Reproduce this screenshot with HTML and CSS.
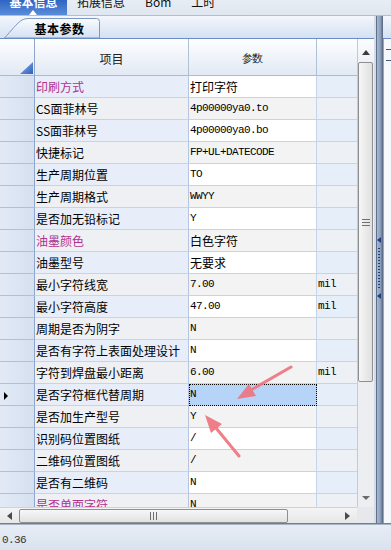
FILE: index.html
```html
<!DOCTYPE html>
<html>
<head>
<meta charset="utf-8">
<link rel="stylesheet" href="styles.css">
</head>
<body>
<div class="app">
  <div class="topbar">
    <div class="ttab active"><span>基本信息</span><i class="ptr"></i></div>
    <div class="ttab"><span>拓展信息</span></div>
    <div class="ttab"><span>Bom</span></div>
    <div class="ttab"><span>工时</span></div>
  </div>
  <div class="main">
    <div class="left">
      <div class="tabstrip">
        <div class="ptab">
          <svg class="ptab-shape" width="97" height="21" viewBox="0 0 97 21">
            <defs>
              <linearGradient id="tg" x1="0" y1="0" x2="0" y2="1">
                <stop offset="0" stop-color="#fbfcfe"/>
                <stop offset="1" stop-color="#d3e0f3"/>
              </linearGradient>
            </defs>
            <path d="M0.5,21 C7,14 13,6 18,3 Q21,1.5 24,1.5 L92.5,1.5 Q95.5,1.5 95.5,4.5 L95.5,21 Z" fill="url(#tg)" stroke="#7d98c4" stroke-width="1"/>
          </svg>
          <span>基本参数</span>
        </div>
      </div>
      <div class="gridwrap">
        <div class="grid">
          <div class="row ghead">
            <div class="c rh corner"><svg width="13" height="12" viewBox="0 0 13 12"><defs><linearGradient id="cg" x1="0" y1="0" x2="1" y2="1"><stop offset="0" stop-color="#8fb0e6"/><stop offset="1" stop-color="#2d60bd"/></linearGradient></defs><polygon points="0,12 13,0 13,12" fill="url(#cg)"/></svg></div>
            <div class="c item">项目</div>
            <div class="c val">参数</div>
            <div class="c unit"></div>
          </div>
          <div class="gbody">
            <div class="row"><div class="c rh"></div><div class="c item hl">印刷方式</div><div class="c val cjk">打印字符</div><div class="c unit"></div></div>
            <div class="row"><div class="c rh"></div><div class="c item">CS面菲林号</div><div class="c val">4p00000ya0.to</div><div class="c unit"></div></div>
            <div class="row"><div class="c rh"></div><div class="c item">SS面菲林号</div><div class="c val">4p00000ya0.bo</div><div class="c unit"></div></div>
            <div class="row"><div class="c rh"></div><div class="c item">快捷标记</div><div class="c val">FP+UL+DATECODE</div><div class="c unit"></div></div>
            <div class="row"><div class="c rh"></div><div class="c item">生产周期位置</div><div class="c val">TO</div><div class="c unit"></div></div>
            <div class="row"><div class="c rh"></div><div class="c item">生产周期格式</div><div class="c val">WWYY</div><div class="c unit"></div></div>
            <div class="row"><div class="c rh"></div><div class="c item">是否加无铅标记</div><div class="c val">Y</div><div class="c unit"></div></div>
            <div class="row"><div class="c rh"></div><div class="c item hl">油墨颜色</div><div class="c val cjk">白色字符</div><div class="c unit"></div></div>
            <div class="row"><div class="c rh"></div><div class="c item">油墨型号</div><div class="c val cjk">无要求</div><div class="c unit"></div></div>
            <div class="row"><div class="c rh"></div><div class="c item">最小字符线宽</div><div class="c val">7.00</div><div class="c unit">mil</div></div>
            <div class="row"><div class="c rh"></div><div class="c item">最小字符高度</div><div class="c val">47.00</div><div class="c unit">mil</div></div>
            <div class="row"><div class="c rh"></div><div class="c item">周期是否为阴字</div><div class="c val">N</div><div class="c unit"></div></div>
            <div class="row"><div class="c rh"></div><div class="c item">是否有字符上表面处理设计</div><div class="c val">N</div><div class="c unit"></div></div>
            <div class="row"><div class="c rh"></div><div class="c item">字符到焊盘最小距离</div><div class="c val">6.00</div><div class="c unit">mil</div></div>
            <div class="row"><div class="c rh"><i class="cur"></i></div><div class="c item">是否字符框代替周期</div><div class="c val sel">N</div><div class="c unit"></div></div>
            <div class="row"><div class="c rh"></div><div class="c item">是否加生产型号</div><div class="c val">Y</div><div class="c unit"></div></div>
            <div class="row"><div class="c rh"></div><div class="c item">识别码位置图纸</div><div class="c val">/</div><div class="c unit"></div></div>
            <div class="row"><div class="c rh"></div><div class="c item">二维码位置图纸</div><div class="c val">/</div><div class="c unit"></div></div>
            <div class="row"><div class="c rh"></div><div class="c item">是否有二维码</div><div class="c val">N</div><div class="c unit"></div></div>
            <div class="row"><div class="c rh"></div><div class="c item hl">是否单面字符</div><div class="c val">N</div><div class="c unit"></div></div>
          </div>
        </div>
        <div class="vscroll">
          <div class="vbtn up"><i class="tri-up"></i></div>
          <div class="vthumb"><i class="grip-h"></i><i class="grip-h"></i><i class="grip-h"></i></div>
          <div class="vtrack"></div>
          <div class="vbtn down"><i class="tri-down"></i></div>
        </div>
      </div>
      <div class="hrow">
        <div class="hscroll">
          <div class="hbtn"><i class="tri-left"></i></div>
          <div class="hthumb"><i class="grip-v"></i><i class="grip-v"></i><i class="grip-v"></i></div>
          <div class="htrack"></div>
          <div class="hbtn"><i class="tri-right"></i></div>
        </div>
        <div class="hcorner"></div>
      </div>
    </div>
    <div class="splitter">
      <i class="stri"></i>
      <i class="sdots"></i>
      <i class="stri"></i>
    </div>
    <div class="rpanel">
      <div class="rstrip"></div>
      <div class="rbody"><i class="rdash"></i><i class="rdash"></i></div>
    </div>
  </div>
  <div class="sep"></div>
  <div class="status">0.36</div>
  <svg class="annot" width="391" height="550" viewBox="0 0 391 550">
    <g fill="#ee7580" stroke="#ee7580" opacity="0.92">
      <line x1="291" y1="367" x2="251" y2="390" stroke-width="3" stroke-linecap="round"/>
      <polygon points="237,399 256,396 249,384" stroke="none"/>
      <line x1="239" y1="456" x2="216" y2="428" stroke-width="3" stroke-linecap="round"/>
      <polygon points="205,415 222,424 211,433" stroke="none"/>
    </g>
  </svg>
</div>
</body>
</html>
```

FILE: styles.css
```css
* { box-sizing: border-box; }
html, body { margin: 0; padding: 0; }
body {
  width: 391px;
  height: 550px;
  overflow: hidden;
  background: #dfe6ef;
  font-family: "Noto Sans CJK SC", "Noto Sans", sans-serif;
  font-size: 12px;
  color: #000;
}
i { display: block; font-style: normal; }

.app {
  position: relative;
  width: 391px;
  height: 550px;
  display: flex;
  flex-direction: column;
}

/* top tab bar */
.topbar {
  height: 16px;
  flex: none;
  display: flex;
  background: linear-gradient(#e8edf5, #dfe6ef);
  border-bottom: 1px solid #b3bfcf;
  overflow: hidden;
}
.ttab {
  height: 15px;
  padding: 0 10px;
  display: flex;
  justify-content: center;
  line-height: 12px;
  color: #111;
}
.ttab span { margin-top: -4px; }
.ttab.active {
  position: relative;
  width: 67px;
  padding: 0;
  background: linear-gradient(#2e64c3, #5b8cd9);
  color: #fff;
  font-weight: bold;
}
.ptr {
  position: absolute;
  left: 29px;
  bottom: 0;
  width: 0;
  height: 0;
  border-left: 4px solid transparent;
  border-right: 4px solid transparent;
  border-bottom: 5px solid #fff;
}

/* main */
.main {
  height: 507px;
  flex: none;
  display: flex;
}
.left {
  width: 374px;
  flex: none;
  display: flex;
  flex-direction: column;
}
.tabstrip {
  height: 23px;
  flex: none;
  display: flex;
  align-items: flex-end;
  padding-left: 4px;
  background: linear-gradient(#f3f6fb, #d4e1f3);
  border-bottom: 1px solid #6a8cc4;
}
.ptab {
  position: relative;
  width: 97px;
  height: 21px;
  display: flex;
  align-items: center;
  justify-content: center;
  padding-left: 14px;
  padding-top: 1px;
  font-weight: bold;
  letter-spacing: 0.5px;
}
.ptab-shape { position: absolute; left: 0; top: 0; }
.ptab span { position: relative; }

/* grid */
.gridwrap {
  height: 468px;
  flex: none;
  display: flex;
}
.grid {
  width: 357px;
  flex: none;
  display: flex;
  flex-direction: column;
  overflow: hidden;
}
.gbody {
  flex: 1;
  overflow: hidden;
}
.row {
  display: grid;
  grid-template-columns: 35px 154px 128px 40px;
  height: 22px;
}
.c {
  border-right: 1px solid #c6d4ea;
  border-bottom: 1px solid #c6d4ea;
  line-height: 21px;
  padding-left: 1px;
  white-space: nowrap;
  overflow: hidden;
}
.c.rh {
  background: linear-gradient(to right, #e2eaf6, #d5e0f0);
  border-right: 1px solid #8ea6cb;
  border-bottom: 1px solid #aec0dc;
  padding-left: 4px;
  display: flex;
  align-items: center;
}
.c.item { border-right-color: #b3c5e1; }
.c.unit { border-right: none; }

.ghead { height: 37px; }
.ghead .c {
  background: linear-gradient(#fdfeff, #e2e9f4);
  border-bottom-color: #a9bbd6;
  border-right-color: #b0c0d8;
  text-align: center;
  line-height: 32px;
  padding-top: 4px;
  padding-left: 0;
  color: #222;
}
.ghead .c.rh {
  border-right-color: #8ea6cb;
  justify-content: flex-end;
  align-items: flex-end;
  padding: 0 1px 1px 0;
}

.gbody .row:nth-child(odd) .item { background: #e7eef9; }
.gbody .row:nth-child(even) .item { background: #eef0f4; }
.gbody .row:nth-child(odd) .val { background: #ffffff; }
.gbody .row:nth-child(even) .val { background: #f3f3f3; }
.gbody .row:nth-child(odd) .unit { background: #e6eef9; }
.gbody .row:nth-child(even) .unit { background: #edf0f5; }

.item.hl { color: #b0308e; }
.val, .unit {
  font-family: "Liberation Mono", "DejaVu Sans Mono", monospace;
  font-size: 11px;
  letter-spacing: -0.6px;
}
.val.cjk {
  font-family: "Noto Sans CJK SC", sans-serif;
  font-size: 12px;
  letter-spacing: 0;
}
.gbody .row .val.sel {
  background: #b6d4f7;
  outline: 1px dotted #000;
  outline-offset: -1px;
}
.cur {
  width: 0;
  height: 0;
  border-left: 4px solid #000;
  border-top: 4px solid transparent;
  border-bottom: 4px solid transparent;
  margin-top: 2px;
}

/* vertical scrollbar */
.vscroll {
  width: 17px;
  flex: none;
  display: flex;
  flex-direction: column;
  background: #eceef1;
  border-left: 1px solid #c4cad3;
}
.vbtn {
  width: 100%;
  height: 23px;
  flex: none;
  display: flex;
  align-items: center;
  justify-content: center;
}
.vbtn.up { background: linear-gradient(#fbfcfe, #eef1f6); padding-top: 4px; }
.vbtn.down { height: 19px; }
.tri-up {
  width: 0; height: 0;
  border-left: 4px solid transparent;
  border-right: 4px solid transparent;
  border-bottom: 5px solid #3c3c3c;
}
.tri-down {
  width: 0; height: 0;
  border-left: 4px solid transparent;
  border-right: 4px solid transparent;
  border-top: 4px solid #6a6a6a;
}
.vthumb {
  width: 15px;
  height: 320px;
  flex: none;
  border: 1px solid #8e8f90;
  border-radius: 2px;
  background: linear-gradient(to right, #f6f6f6, #e0e0e0);
  display: flex;
  flex-direction: column;
  align-items: center;
  justify-content: center;
  gap: 2px;
}
.grip-h { width: 8px; height: 1px; background: #6f6f6f; }
.vtrack { flex: 1; }

/* horizontal scrollbar */
.hrow {
  height: 16px;
  flex: none;
  display: flex;
}
.hscroll {
  width: 357px;
  flex: none;
  display: flex;
  align-items: center;
  background: linear-gradient(#f4f4f4, #e7e7e7);
  border-top: 1px solid #cfd2d6;
}
.hbtn {
  width: 19px;
  height: 100%;
  flex: none;
  display: flex;
  align-items: center;
  justify-content: center;
}
.tri-left {
  width: 0; height: 0;
  border-top: 4px solid transparent;
  border-bottom: 4px solid transparent;
  border-right: 5px solid #4a4a4a;
}
.tri-right {
  width: 0; height: 0;
  border-top: 4px solid transparent;
  border-bottom: 4px solid transparent;
  border-left: 5px solid #4a4a4a;
}
.hthumb {
  width: 269px;
  height: 14px;
  flex: none;
  border: 1px solid #8e8f90;
  border-radius: 2px;
  background: linear-gradient(#f7f7f7, #e1e1e1);
  display: flex;
  align-items: center;
  justify-content: center;
  gap: 2px;
}
.grip-v { width: 1px; height: 8px; background: #6f6f6f; }
.htrack { flex: 1; }
.hcorner { flex: 1; background: #e6e8eb; }

/* splitter */
.splitter {
  width: 9px;
  flex: none;
  display: flex;
  flex-direction: column;
  align-items: center;
  padding-top: 221px;
  gap: 5px;
  background: linear-gradient(to right, #d5dce6 0, #d5dce6 2px, #5e6f8b 2px, #5e6f8b 3px, #a9b9d2 3px, #8899b5 7px, #5f708d 8px, #5f708d 9px);
}
.stri {
  width: 0; height: 0;
  border-top: 3px solid transparent;
  border-bottom: 3px solid transparent;
  border-right: 4px solid #1d3f80;
}
.sdots {
  width: 2px;
  height: 40px;
  background: repeating-linear-gradient(#1d3f80 0 1px, transparent 1px 3px);
}

/* right panel */
.rpanel {
  flex: 1;
  display: flex;
  flex-direction: column;
}
.rstrip {
  height: 23px;
  flex: none;
  background: linear-gradient(#f3f6fb, #d4e1f3);
  border-bottom: 1px solid #6a8cc4;
}
.rbody {
  flex: 1;
  background: #f6f8fb;
  border-left: 1px solid #8ea7cc;
  padding: 10px 1px 0 2px;
  display: flex;
  flex-direction: column;
  gap: 10px;
}
.rdash { width: 5px; height: 1px; background: #3e5a88; }

/* bottom */
.sep {
  height: 2px;
  flex: none;
  background: linear-gradient(#6f7f98 0 1px, #a8b4c6 1px);
}
.status {
  height: 25px;
  flex: none;
  padding: 9px 0 0 2px;
  line-height: 12px;
  background: linear-gradient(#e6edf5, #d9e2ee);
  font-family: "Liberation Mono", "DejaVu Sans Mono", monospace;
  font-size: 11px;
  letter-spacing: -0.6px;
  color: #333;
}

.annot {
  position: absolute;
  left: 0;
  top: 0;
  pointer-events: none;
}
```
